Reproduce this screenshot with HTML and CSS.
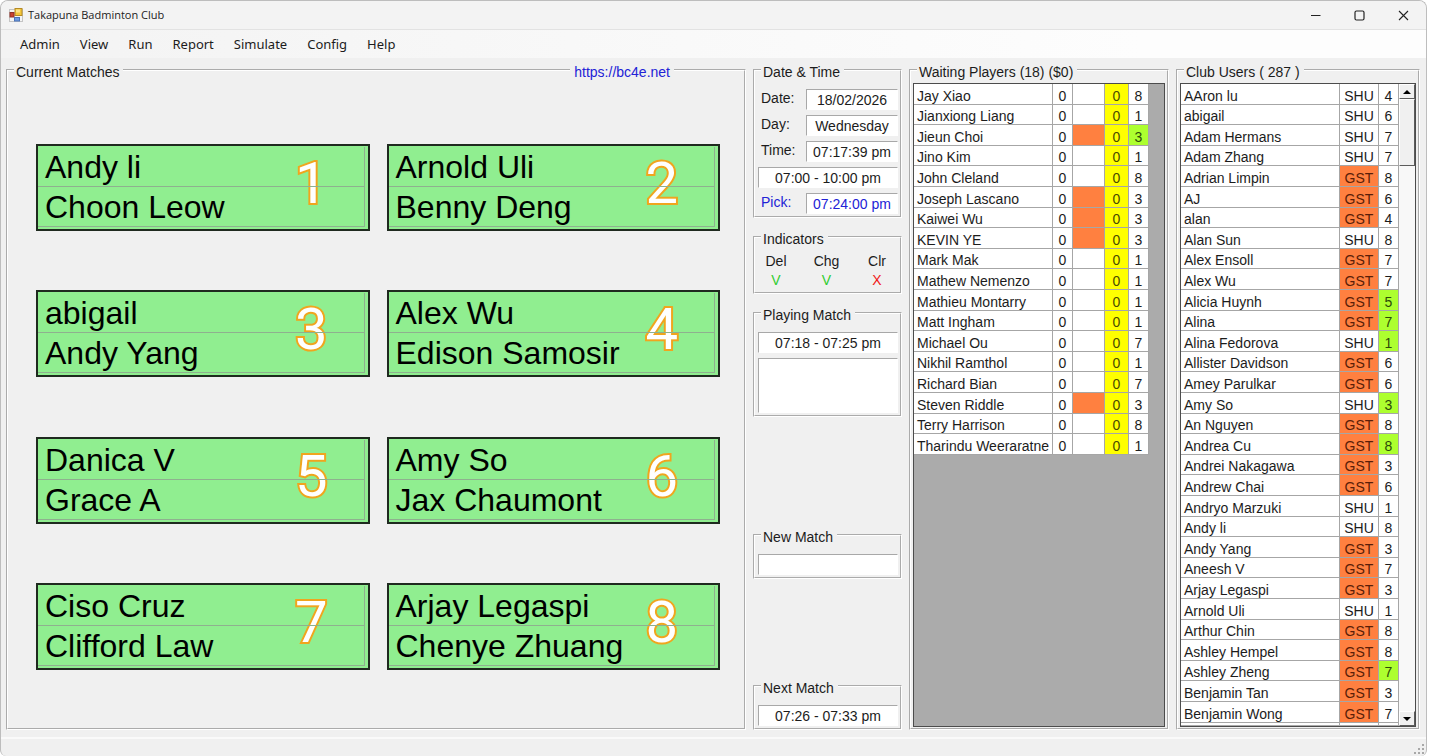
FILE: index.html
```html
<!DOCTYPE html>
<html lang="en">
<head>
<meta charset="utf-8">
<title>Takapuna Badminton Club</title>
<link rel="stylesheet" href="styles.css">
</head>
<body>
<div class="window">
  <header class="titlebar">
    <svg class="app-icon" width="14" height="14" viewBox="0 0 14 14" aria-hidden="true">
      <rect x="0.5" y="1.5" width="13" height="12" fill="#f4f4f4" stroke="#c4c4c4"/>
      <rect x="6" y="0.5" width="7" height="7" fill="#f3c63a" stroke="#b58a24"/>
      <rect x="7" y="1.5" width="4" height="3" fill="#fbe28a"/>
      <rect x="1" y="4.5" width="4" height="4.5" fill="#c9412f" stroke="#8f3328"/>
      <rect x="5.5" y="9.5" width="5" height="3.5" fill="#6f9be0" stroke="#4a73b8"/>
    </svg>
    <h1 class="app-title">Takapuna Badminton Club</h1>
    <div class="window-controls">
      <button class="win-btn" aria-label="Minimize"><svg width="11" height="11" viewBox="0 0 11 11"><path d="M1 5.5h9.5" stroke="#222" fill="none"/></svg></button>
      <button class="win-btn" aria-label="Maximize"><svg width="11" height="11" viewBox="0 0 11 11"><rect x="1" y="1" width="9" height="9" rx="1.5" stroke="#222" stroke-width="1.2" fill="none"/></svg></button>
      <button class="win-btn" aria-label="Close"><svg width="11" height="11" viewBox="0 0 11 11"><path d="M1 1l9 9M10 1l-9 9" stroke="#222" stroke-width="1.1" fill="none"/></svg></button>
    </div>
  </header>
  <nav class="menubar">
    <button class="menu">Admin</button>
    <button class="menu">View</button>
    <button class="menu">Run</button>
    <button class="menu">Report</button>
    <button class="menu">Simulate</button>
    <button class="menu">Config</button>
    <button class="menu">Help</button>
  </nav>
  <main class="panels">
    <div class="matches-wrap">
      <a class="site-link" href="https://bc4e.net">https://bc4e.net</a>
      <fieldset class="group matches">
        <legend>Current Matches</legend>
        <div class="courts">
          <div class="court"><span class="court-no">1</span><div class="players"><div>Andy li</div><div>Choon Leow</div></div></div>
          <div class="court"><span class="court-no">2</span><div class="players"><div>Arnold Uli</div><div>Benny Deng</div></div></div>
          <div class="court"><span class="court-no">3</span><div class="players"><div>abigail</div><div>Andy Yang</div></div></div>
          <div class="court"><span class="court-no">4</span><div class="players"><div>Alex Wu</div><div>Edison Samosir</div></div></div>
          <div class="court"><span class="court-no">5</span><div class="players"><div>Danica V</div><div>Grace A</div></div></div>
          <div class="court"><span class="court-no">6</span><div class="players"><div>Amy So</div><div>Jax Chaumont</div></div></div>
          <div class="court"><span class="court-no">7</span><div class="players"><div>Ciso Cruz</div><div>Clifford Law</div></div></div>
          <div class="court"><span class="court-no">8</span><div class="players"><div>Arjay Legaspi</div><div>Chenye Zhuang</div></div></div>
        </div>
      </fieldset>
    </div>
    <div class="side">
      <fieldset class="group">
        <legend>Date &amp; Time</legend>
        <div class="times">
          <label for="date">Date:</label><input id="date" class="field" value="18/02/2026" readonly>
          <label for="day">Day:</label><input id="day" class="field" value="Wednesday" readonly>
          <label for="time">Time:</label><input id="time" class="field" value="07:17:39 pm" readonly>
          <input class="field wide" aria-label="Session" value="07:00 - 10:00 pm" readonly>
          <label for="pick" class="blue">Pick:</label><input id="pick" class="field blue" value="07:24:00 pm" readonly>
        </div>
      </fieldset>
      <fieldset class="group">
        <legend>Indicators</legend>
        <div class="indicators">
          <span>Del</span><span>Chg</span><span>Clr</span>
          <span class="yes">V</span><span class="yes">V</span><span class="no">X</span>
        </div>
      </fieldset>
      <fieldset class="group">
        <legend>Playing Match</legend>
        <div class="stack">
          <input class="field" aria-label="Playing match time" value="07:18 - 07:25 pm" readonly>
          <textarea class="field notes" aria-label="Playing match notes"></textarea>
        </div>
      </fieldset>
      <fieldset class="group new-match">
        <legend>New Match</legend>
        <div class="stack"><input class="field" aria-label="New match"></div>
      </fieldset>
      <fieldset class="group next-match">
        <legend>Next Match</legend>
        <div class="stack"><input class="field" aria-label="Next match time" value="07:26 - 07:33 pm" readonly></div>
      </fieldset>
    </div>
    <fieldset class="group list">
      <legend>Waiting Players (18) ($0)</legend>
      <div class="grid-frame">
        <table class="grid waiting">
          <colgroup><col class="w-name"><col class="w-n"><col class="w-flag"><col class="w-y"><col class="w-g"></colgroup>
          <tbody>
          <tr><td>Jay Xiao</td><td>0</td><td></td><td>0</td><td>8</td></tr>
          <tr><td>Jianxiong Liang</td><td>0</td><td></td><td>0</td><td>1</td></tr>
          <tr><td>Jieun Choi</td><td>0</td><td class="orange"></td><td>0</td><td class="lime">3</td></tr>
          <tr><td>Jino Kim</td><td>0</td><td></td><td>0</td><td>1</td></tr>
          <tr><td>John Cleland</td><td>0</td><td></td><td>0</td><td>8</td></tr>
          <tr><td>Joseph Lascano</td><td>0</td><td class="orange"></td><td>0</td><td>3</td></tr>
          <tr><td>Kaiwei Wu</td><td>0</td><td class="orange"></td><td>0</td><td>3</td></tr>
          <tr><td>KEVIN YE</td><td>0</td><td class="orange"></td><td>0</td><td>3</td></tr>
          <tr><td>Mark Mak</td><td>0</td><td></td><td>0</td><td>1</td></tr>
          <tr><td>Mathew Nemenzo</td><td>0</td><td></td><td>0</td><td>1</td></tr>
          <tr><td>Mathieu Montarry</td><td>0</td><td></td><td>0</td><td>1</td></tr>
          <tr><td>Matt Ingham</td><td>0</td><td></td><td>0</td><td>1</td></tr>
          <tr><td>Michael Ou</td><td>0</td><td></td><td>0</td><td>7</td></tr>
          <tr><td>Nikhil Ramthol</td><td>0</td><td></td><td>0</td><td>1</td></tr>
          <tr><td>Richard Bian</td><td>0</td><td></td><td>0</td><td>7</td></tr>
          <tr><td>Steven Riddle</td><td>0</td><td class="orange"></td><td>0</td><td>3</td></tr>
          <tr><td>Terry Harrison</td><td>0</td><td></td><td>0</td><td>8</td></tr>
          <tr><td>Tharindu Weeraratne</td><td>0</td><td></td><td>0</td><td>1</td></tr>
          </tbody>
        </table>
      </div>
    </fieldset>
    <fieldset class="group list">
      <legend>Club Users ( 287 )</legend>
      <div class="grid-frame">
        <div class="grid-view">
        <table class="grid users">
          <colgroup><col><col class="u-type"><col class="w-g"></colgroup>
          <tbody>
          <tr><td>AAron lu</td><td>SHU</td><td>4</td></tr>
          <tr><td>abigail</td><td>SHU</td><td>6</td></tr>
          <tr><td>Adam Hermans</td><td>SHU</td><td>7</td></tr>
          <tr><td>Adam Zhang</td><td>SHU</td><td>7</td></tr>
          <tr><td>Adrian Limpin</td><td class="orange">GST</td><td>8</td></tr>
          <tr><td>AJ</td><td class="orange">GST</td><td>6</td></tr>
          <tr><td>alan</td><td class="orange">GST</td><td>4</td></tr>
          <tr><td>Alan Sun</td><td>SHU</td><td>8</td></tr>
          <tr><td>Alex Ensoll</td><td class="orange">GST</td><td>7</td></tr>
          <tr><td>Alex Wu</td><td class="orange">GST</td><td>7</td></tr>
          <tr><td>Alicia Huynh</td><td class="orange">GST</td><td class="lime">5</td></tr>
          <tr><td>Alina</td><td class="orange">GST</td><td class="lime">7</td></tr>
          <tr><td>Alina Fedorova</td><td>SHU</td><td class="lime">1</td></tr>
          <tr><td>Allister Davidson</td><td class="orange">GST</td><td>6</td></tr>
          <tr><td>Amey Parulkar</td><td class="orange">GST</td><td>6</td></tr>
          <tr><td>Amy So</td><td>SHU</td><td class="lime">3</td></tr>
          <tr><td>An Nguyen</td><td class="orange">GST</td><td>8</td></tr>
          <tr><td>Andrea Cu</td><td class="orange">GST</td><td class="lime">8</td></tr>
          <tr><td>Andrei Nakagawa</td><td class="orange">GST</td><td>3</td></tr>
          <tr><td>Andrew Chai</td><td class="orange">GST</td><td>6</td></tr>
          <tr><td>Andryo Marzuki</td><td>SHU</td><td>1</td></tr>
          <tr><td>Andy li</td><td>SHU</td><td>8</td></tr>
          <tr><td>Andy Yang</td><td class="orange">GST</td><td>3</td></tr>
          <tr><td>Aneesh V</td><td class="orange">GST</td><td>7</td></tr>
          <tr><td>Arjay Legaspi</td><td class="orange">GST</td><td>3</td></tr>
          <tr><td>Arnold Uli</td><td>SHU</td><td>1</td></tr>
          <tr><td>Arthur Chin</td><td class="orange">GST</td><td>8</td></tr>
          <tr><td>Ashley Hempel</td><td class="orange">GST</td><td>8</td></tr>
          <tr><td>Ashley Zheng</td><td class="orange">GST</td><td class="lime">7</td></tr>
          <tr><td>Benjamin Tan</td><td class="orange">GST</td><td>3</td></tr>
          <tr><td>Benjamin Wong</td><td class="orange">GST</td><td>7</td></tr>
          <tr><td></td><td></td><td></td></tr>
          </tbody>
        </table>
        </div>
        <div class="scrollbar">
          <button class="sb-btn" aria-label="Scroll up"><svg width="8" height="4" viewBox="0 0 8 4"><path d="M0 4L4 0l4 4z"/></svg></button>
          <div class="sb-thumb"></div>
          <button class="sb-btn sb-down" aria-label="Scroll down"><svg width="8" height="4" viewBox="0 0 8 4"><path d="M0 0l4 4 4-4z"/></svg></button>
        </div>
      </div>
    </fieldset>
  </main>
  <footer class="statusbar">
    <svg width="11" height="11" viewBox="0 0 11 11" fill="#a8a8a8" aria-hidden="true"><path d="M8 0h2v2H8zM4 4h2v2H4zM8 4h2v2H8zM0 8h2v2H0zM4 8h2v2H4zM8 8h2v2H8z"/></svg>
  </footer>
</div>
</body>
</html>
```

FILE: styles.css
```css
* { box-sizing: border-box; }

body {
  margin: 0;
  padding-right: 13px;
  background: #fff;
  color: #1c1c1c;
  font: 14px/16px "Liberation Sans", Arial, sans-serif;
}

button, input, textarea { font: inherit; color: inherit; }

.window {
  display: flex;
  flex-direction: column;
  min-height: 100vh;
  border: 1px solid #bdbdbd;
  border-bottom: 0;
  border-radius: 8px 8px 6px 6px;
  background: #f0f0f0;
  overflow: hidden;
}

/* Title bar and menu */
.titlebar {
  display: flex;
  align-items: center;
  gap: 5px;
  height: 29px;
  padding: 0 1px 0 8px;
  background: #f3f3f3;
  border-bottom: 1px solid #e2e2e2;
}
.app-title {
  margin: 0;
  font: 11px/16px "Open Sans", "Noto Sans", sans-serif;
}
.window-controls { display: flex; margin-left: auto; }
.win-btn {
  display: flex;
  align-items: center;
  justify-content: center;
  width: 44px;
  height: 28px;
  padding: 0;
  border: 0;
  background: none;
}

.menubar {
  display: flex;
  height: 28px;
  padding-left: 9px;
  background: linear-gradient(90deg, #f3f3f3, #fdfdfd 80%);
}
.menu {
  padding: 0 10px;
  border: 0;
  background: none;
  font: 13px/20px "Noto Sans", "Open Sans", sans-serif;
}

/* Panels */
.panels {
  flex: 1;
  display: grid;
  grid-template-columns: minmax(0, 1fr) 149px 260px 244px;
  gap: 7px;
  padding: 2px 6px 7px 5px;
}
.group {
  display: flex;
  flex-direction: column;
  min-width: 0;
  margin: 0;
  padding: 0;
  border: 2px groove #fff;
}
.group legend {
  margin-left: 6px;
  padding: 4px 4px 0 2px;
}

.matches-wrap { position: relative; display: grid; }
.site-link {
  position: absolute;
  top: 0;
  right: 72px;
  padding: 4px 4px 0;
  background: #f0f0f0;
  color: #2222d6;
  text-decoration: none;
}
.courts {
  flex: 1;
  display: grid;
  grid-template-columns: 1fr 1fr;
  align-content: space-between;
  gap: 17px;
  padding: 64px 24px 58px 28px;
}
.court {
  position: relative;
  z-index: 0;
  padding: 1px 3px 2px 0;
  border: 2px solid #1f2a1f;
  background: #90ee90;
}
.players {
  border-right: 1px solid #8fb08f;
  color: #000;
  font-size: 32px;
  line-height: 37px;
}
.players div {
  padding: 2px 0 0 7px;
  border-bottom: 1px solid #8fb08f;
}
.court-no {
  position: absolute;
  z-index: -1;
  top: 7px;
  right: 40px;
  color: #fff;
  font-family: Roboto, "Liberation Sans", sans-serif;
  font-size: 58px;
  line-height: 60px;
  -webkit-text-stroke: 4px #f0a51e;
  paint-order: stroke fill;
}

/* Middle column */
.side { display: flex; flex-direction: column; gap: 9px; }
.new-match { margin-top: auto; }
.next-match { margin-top: 88px; }

.field {
  width: 100%;
  height: 21px;
  padding: 0;
  border: 1px solid #fff;
  border-top-color: #a8a8a8;
  border-left-color: #a8a8a8;
  background: #fff;
  text-align: center;
}
.notes { display: block; height: 55px; resize: none; }
.blue { color: #2222d6; }

.times {
  display: grid;
  grid-template-columns: 48px 1fr;
  gap: 5px 0;
  padding: 9px 2px 2px 3px;
}
.times label { padding: 1px 0 0 3px; }
.wide { grid-column: 1 / -1; }
.stack {
  display: grid;
  gap: 5px;
  padding: 9px 2px 2px 3px;
}
.indicators {
  display: grid;
  grid-template-columns: 42px 1fr 42px;
  row-gap: 3px;
  padding: 6px 2px 4px 0;
  text-align: center;
}
.yes { color: #32cd32; }
.no { color: #f01818; }

/* Lists */
.grid-frame {
  flex: 1;
  display: flex;
  align-items: flex-start;
  margin: 3px 2px 1px;
  border: 1px solid #4c4c4c;
  background: #ababab;
  overflow: hidden;
}
.grid-view { flex: 1; height: 641px; overflow: hidden; }
.grid {
  border-collapse: separate;
  border-spacing: 0;
  table-layout: fixed;
  background: #fff;
}
.waiting { width: 235px; }
.users { width: 100%; }
.w-n { width: 20px; }
.w-flag { width: 32px; }
.w-y { width: 24px; }
.w-g { width: 20px; }
.u-type { width: 39px; }
.grid tr { height: 21px; }
.grid tr:nth-child(5n+2), .grid tr:nth-child(5n+4) { height: 20px; }
.grid td {
  padding: 3px 0 0;
  border-right: 1px solid #a6a6a6;
  border-bottom: 1px solid #a6a6a6;
  text-align: center;
  white-space: nowrap;
}
.grid td:first-child { padding-left: 3px; text-align: left; }
.grid .orange { background: #ff8040; color: #5a1e08; }
.grid .lime { background: #adff2f; color: #2c4a08; }
.waiting td:nth-child(4) { background: #ff0; color: #4a4a00; }

.scrollbar {
  display: flex;
  flex-direction: column;
  align-self: stretch;
  width: 16px;
  background: #f8f8f8;
}
.sb-btn, .sb-thumb {
  border: 1px solid #fff;
  border-right-color: #5c5c5c;
  border-bottom-color: #5c5c5c;
  background: #f0f0f0;
}
.sb-btn {
  display: flex;
  align-items: center;
  justify-content: center;
  height: 15px;
  padding: 0;
}
.sb-thumb { height: 67px; }
.sb-down { margin-top: auto; }

.statusbar {
  display: flex;
  align-items: flex-end;
  justify-content: flex-end;
  height: 19px;
  padding: 0 1px 1px 0;
  border-top: 2px solid #fafafa;
}
```
